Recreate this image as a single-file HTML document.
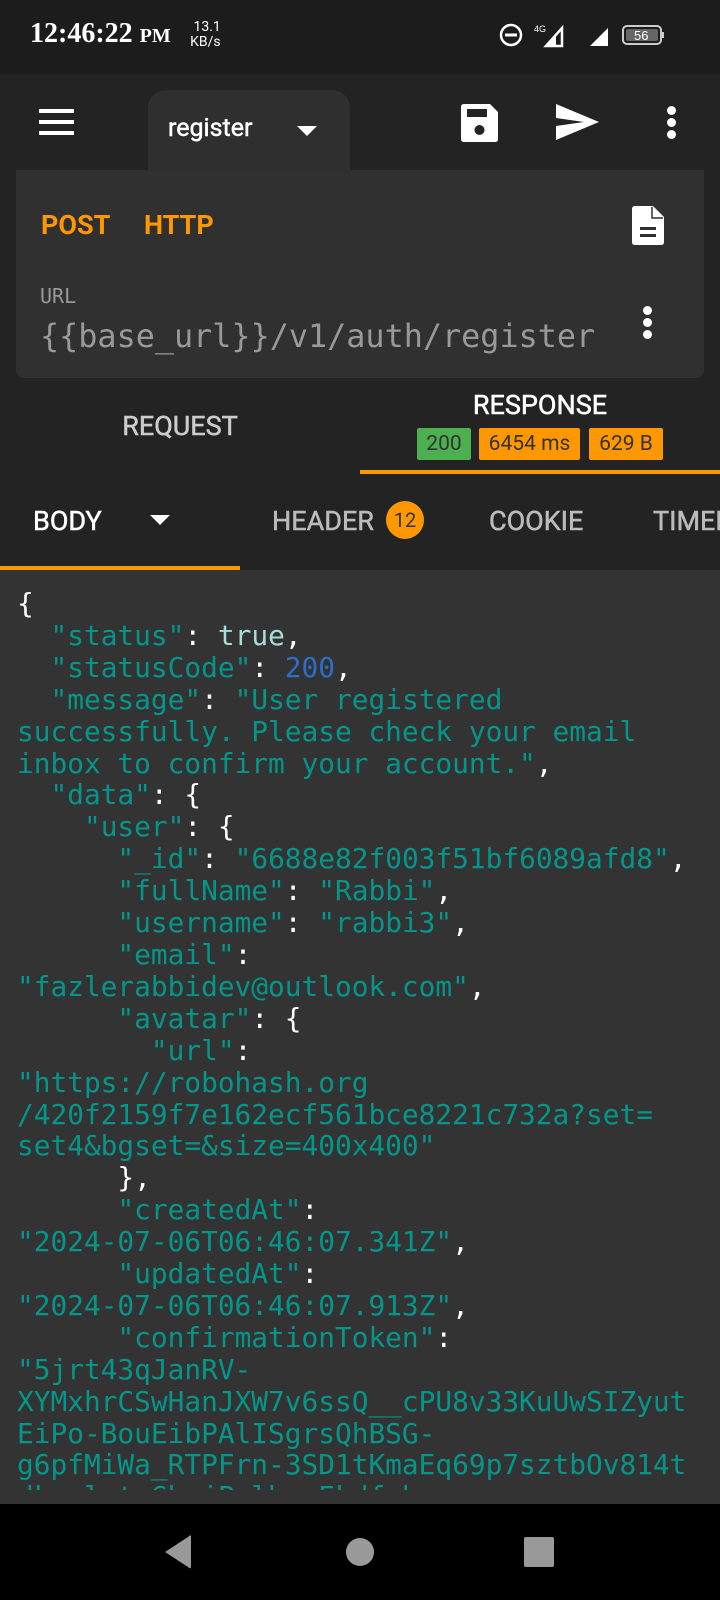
<!DOCTYPE html>
<html><head><meta charset="utf-8"><style>
*{margin:0;padding:0;box-sizing:border-box}
html,body{width:720px;height:1600px;overflow:hidden}
body{background:#222;position:relative;font-family:"Roboto","Liberation Sans",sans-serif;color:#fff}
.abs{position:absolute}
.med{-webkit-text-stroke:0.5px currentColor}
.code{position:absolute;left:17px;top:588px;font-family:"DejaVu Sans Mono","Liberation Mono",monospace;font-size:27.8px;line-height:31.9px;white-space:pre;color:#fff}
.s{color:#04968a}.t{color:#a8dcd6}.n{color:#2a6fc9}
.badge{position:absolute;top:428px;height:32px;border-radius:2px;color:#333;font-size:21px;line-height:32px;text-align:center}
</style></head><body>
<div class="abs" style="left:0;top:0;width:720px;height:1600px;overflow:hidden">
<div class="abs" style="left:0;top:0;width:720px;height:74px;background:#1c1c1c"></div>
<div class="abs" style="left:30px;top:18px;font-family:'Liberation Serif',serif;font-weight:bold;font-size:28px">12:46:22 <span style="font-size:20px">PM</span></div>
<div class="abs" style="left:190px;top:20px;font-size:14px;line-height:15px;text-align:center">&nbsp;13.1<br>KB/s</div>
<svg class="abs" style="left:498px;top:20px" width="170" height="30" viewBox="0 0 170 30">
<circle cx="13" cy="15" r="10" fill="none" stroke="#fff" stroke-width="2.5"/><rect x="7" y="13.5" width="12" height="3" fill="#fff"/>
<text x="36" y="12" font-size="9" fill="#fff" font-family="Liberation Sans">4G</text>
<path d="M48 26 L64 8 L64 26 Z" fill="none" stroke="#fff" stroke-width="2.5"/><path d="M48 26 L58 15 L58 26Z" fill="#fff"/>
<path d="M92 26 L110 8 L110 26 Z" fill="#fff"/>
<rect x="125" y="6" width="38" height="18" rx="4" fill="none" stroke="#ccc" stroke-width="2"/><rect x="128" y="9" width="32" height="12" rx="2" fill="#666"/><rect x="164" y="12" width="2" height="6" fill="#ccc"/>
<text x="136" y="20" font-size="13" fill="#fff" font-family="Liberation Sans">56</text></svg>
<div class="abs" style="left:0;top:74px;width:720px;height:496px;background:#232323"></div>
<div class="abs" style="left:39px;top:109px;width:35px;height:4px;background:#fff;box-shadow:0 11px 0 #fff,0 22px 0 #fff"></div>
<div class="abs" style="left:148px;top:90px;width:202px;height:85px;background:#2f2f2f;border-radius:18px 18px 0 0"></div>
<div class="abs med" style="left:168px;top:114px;font-size:25px">register</div>
<div class="abs" style="left:297px;top:126px;width:0;height:0;border-left:10px solid transparent;border-right:10px solid transparent;border-top:10px solid #fff"></div>
<svg class="abs" style="left:461px;top:104px" width="37" height="38" viewBox="0 0 37 38"><path d="M3 0 H29 L37 8 V35 Q37 38 34 38 H3 Q0 38 0 35 V3 Q0 0 3 0Z" fill="#fff"/><rect x="6" y="5" width="20" height="8" fill="#232323"/><circle cx="18.5" cy="26" r="5" fill="#232323"/></svg>
<svg class="abs" style="left:556px;top:104px" width="43" height="36" viewBox="0 0 43 36"><path d="M0 0 L43 18 L0 36 L0 22 L28 18 L0 14Z" fill="#fff"/></svg>
<div class="abs" style="left:667px;top:106px;width:9px;height:9px;border-radius:50%;background:#fff;box-shadow:0 12px 0 #fff,0 24px 0 #fff"></div>
<div class="abs" style="left:16px;top:170px;width:688px;height:208px;background:#303030;border-radius:0 0 8px 8px"></div>
<div class="abs" style="left:16px;top:170px;width:132px;height:12px;background:#303030;border-radius:10px 0 0 0"></div>
<div class="abs" style="left:350px;top:170px;width:354px;height:12px;background:#303030;border-radius:0 10px 0 0"></div>
<div class="abs" style="left:41px;top:209px;font-size:27px;font-weight:bold;color:#ff9800">POST</div>
<div class="abs" style="left:144px;top:209px;font-size:27px;font-weight:bold;color:#ff9800">HTTP</div>
<svg class="abs" style="left:632px;top:206px" width="32" height="39" viewBox="0 0 32 39"><path d="M3 0 H21 L32 11 V36 Q32 39 29 39 H3 Q0 39 0 36 V3 Q0 0 3 0Z" fill="#fff"/><rect x="8" y="21" width="16" height="3" fill="#303030"/><rect x="8" y="28" width="16" height="3" fill="#303030"/><path d="M20 1 V12 H31" fill="none" stroke="#303030" stroke-width="1.5"/></svg>
<div class="abs" style="left:40px;top:284px;font-family:'DejaVu Sans Mono',monospace;font-size:20px;color:#999">URL</div>
<div class="abs" style="left:40px;top:318px;font-family:'DejaVu Sans Mono',monospace;font-size:31.8px;color:#999;white-space:pre">{{base_url}}/v1/auth/register</div>
<div class="abs" style="left:643px;top:306px;width:9px;height:9px;border-radius:50%;background:#fff;box-shadow:0 12px 0 #fff,0 24px 0 #fff"></div>
<div class="abs med" style="left:80px;top:410px;width:200px;text-align:center;font-size:27px;color:#ccc">REQUEST</div>
<div class="abs med" style="left:440px;top:389px;width:200px;text-align:center;font-size:27px;color:#fff">RESPONSE</div>
<div class="badge" style="left:417px;width:54px;background:#4caf50">200</div>
<div class="badge" style="left:479px;width:101px;background:#ff9800">6454 ms</div>
<div class="badge" style="left:589px;width:74px;background:#ff9800">629 B</div>
<div class="abs" style="left:360px;top:470px;width:360px;height:4px;background:#ff9800"></div>
<div class="abs med" style="left:33px;top:505px;font-size:27px">BODY</div>
<div class="abs" style="left:150px;top:515px;width:0;height:0;border-left:10px solid transparent;border-right:10px solid transparent;border-top:10px solid #fff"></div>
<div class="abs med" style="left:272px;top:505px;font-size:27px;color:#bbb">HEADER</div>
<div class="abs" style="left:386px;top:501px;width:38px;height:38px;border-radius:50%;background:#ff9800;color:#333;font-size:20px;line-height:38px;text-align:center">12</div>
<div class="abs med" style="left:489px;top:505px;font-size:27px;color:#bbb">COOKIE</div>
<div class="abs med" style="left:653px;top:505px;width:67px;overflow:hidden;font-size:27px;color:#bbb;white-space:nowrap">TIMELINE</div>
<div class="abs" style="left:0;top:566px;width:240px;height:4px;background:#ff9800"></div>
<div class="abs" style="left:0;top:570px;width:720px;height:934px;background:#333"></div>
<div class="abs" style="left:0;top:570px;width:720px;height:920px;overflow:hidden">
<div class="code" style="top:18px">{
  <span class="s">"status"</span>: <span class="t">true</span>,
  <span class="s">"statusCode"</span>: <span class="n">200</span>,
  <span class="s">"message"</span>: <span class="s">"User registered
successfully. Please check your email
inbox to confirm your account."</span>,
  <span class="s">"data"</span>: {
    <span class="s">"user"</span>: {
      <span class="s">"_id"</span>: <span class="s">"6688e82f003f51bf6089afd8"</span>,
      <span class="s">"fullName"</span>: <span class="s">"Rabbi"</span>,
      <span class="s">"username"</span>: <span class="s">"rabbi3"</span>,
      <span class="s">"email"</span>:
<span class="s">"fazlerabbidev@outlook.com"</span>,
      <span class="s">"avatar"</span>: {
        <span class="s">"url"</span>:
<span class="s">"https://robohash.org
/420f2159f7e162ecf561bce8221c732a?set=
set4&amp;bgset=&amp;size=400x400"</span>
      },
      <span class="s">"createdAt"</span>:
<span class="s">"2024-07-06T06:46:07.341Z"</span>,
      <span class="s">"updatedAt"</span>:
<span class="s">"2024-07-06T06:46:07.913Z"</span>,
      <span class="s">"confirmationToken"</span>:
<span class="s">"5jrt43qJanRV-
XYMxhrCSwHanJXW7v6ssQ__cPU8v33KuUwSIZyut
EiPo-BouEibPAlISgrsQhBSG-
g6pfMiWa_RTPFrn-3SD1tKmaEq69p7sztbOv814t
dkqwlrtpGhzjPqlbnmEkdfgh</span></div>
</div>
<div class="abs" style="left:0;top:1504px;width:720px;height:96px;background:#000"></div>
<svg class="abs" style="left:0;top:1530px" width="720" height="45"><path d="M191 6 L191 36 Q191 40 188 37 L165 22 L188 7 Q191 4 191 6Z" fill="#999"/><ellipse cx="360" cy="22" rx="14" ry="14" fill="#999"/><rect x="524" y="7" width="30" height="30" rx="2" fill="#999"/></svg>
</div>
</body></html>
